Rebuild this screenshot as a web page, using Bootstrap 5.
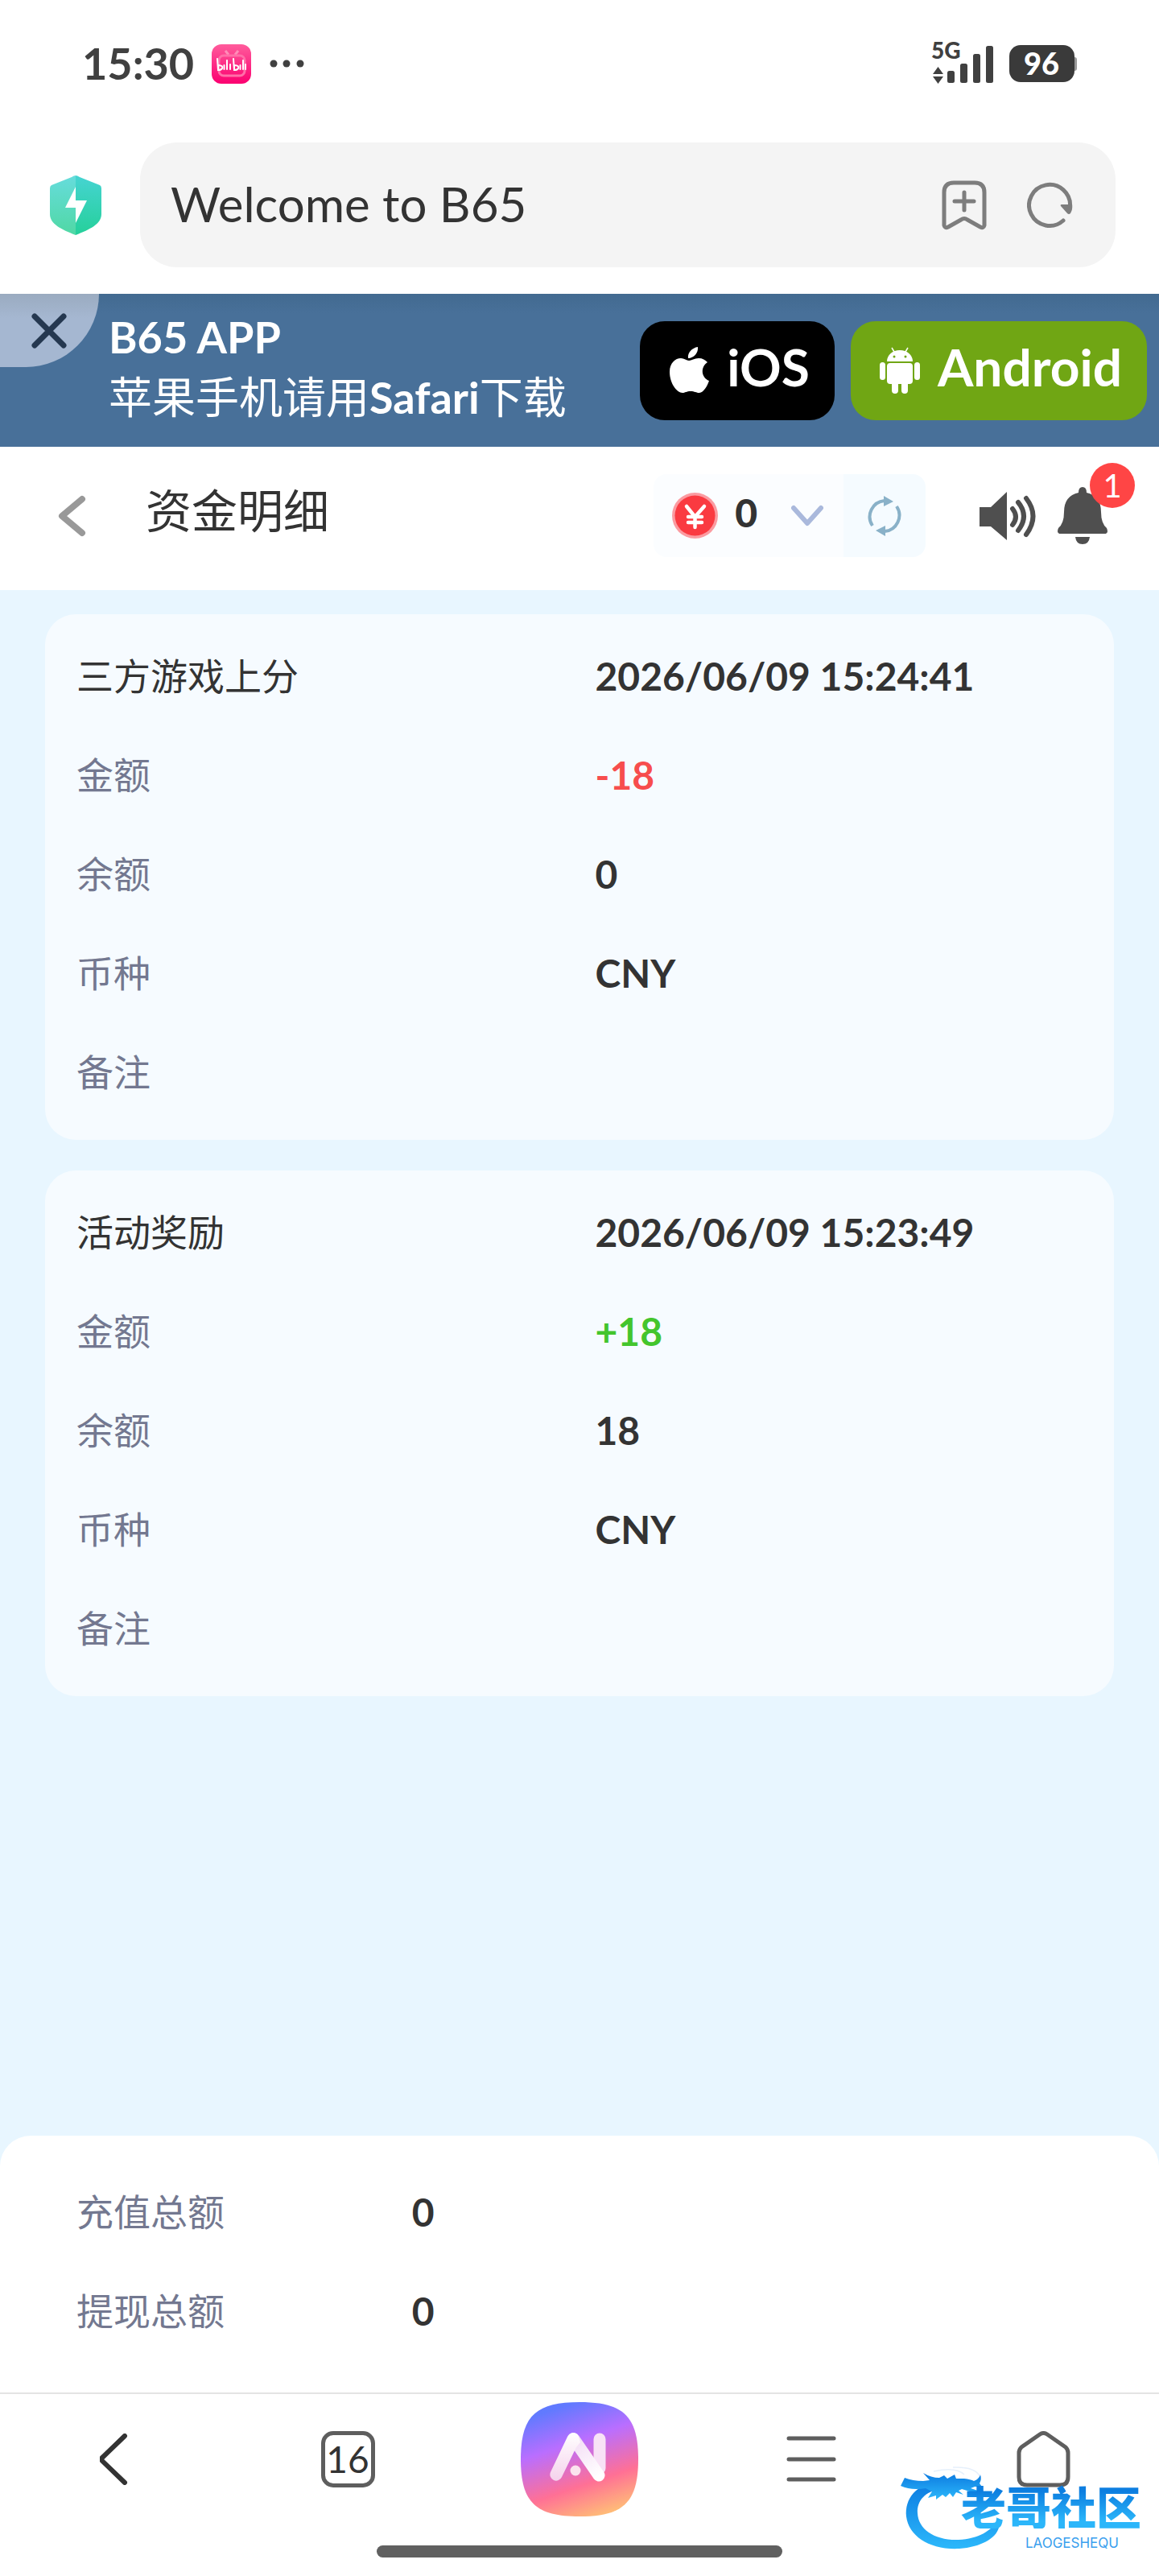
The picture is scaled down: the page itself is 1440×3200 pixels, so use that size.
<!DOCTYPE html>
<html lang="zh-CN">
<head>
<meta charset="utf-8">
<meta name="viewport" content="width=device-width, initial-scale=1">
<title>资金明细</title>
<link href="https://cdn.jsdelivr.net/npm/bootstrap@5.3.0/dist/css/bootstrap.min.css" rel="stylesheet">
<style>
body { font-family: Lato, "Noto Sans CJK SC", sans-serif; color: #333; background: #fff; line-height: 1.2; }
svg { display: block; flex: none; }
button { color: inherit; }
.plain-btn { background: none; border: 0; padding: 0; }

.status { height: 158px; padding: 0 99px 0 102px; gap: 22px; color: #404040; }
.status-time { font-size: 54px; font-weight: 700; }

.addr-row { padding: 19px 54px 33px 62px; gap: 48px; }
.addr-box { height: 155px; border-radius: 46px; background: #f4f4f4; padding: 0 53px 0 38px; gap: 50px; color: #7d7d7d; }
.addr-box input { font-size: 60px; color: #333; background: none; border: 0; padding: 0 0 4px; min-width: 0; outline: 0; }

.app-banner { height: 190px; background: linear-gradient(#426a90, #487099 24px, #487099); color: #fff; padding: 0 15px 8px 135px; }
.app-banner p { font-size: 54px; line-height: 75px; margin: 0; }
.banner-close { left: 0; top: 0; width: 123px; height: 91px; border-radius: 0 0 91px 0; background: linear-gradient(#9aabc0, #a5b7d1 30px); padding: 0 0 0 39px; color: #253850; }
.store-links { gap: 20px; margin-top: 8px; }
.store-btn { height: 123px; border-radius: 31px; color: #fff; font-size: 64px; font-weight: 700; padding: 0 31px 0 36px; gap: 22px; text-decoration: none; }
.store-btn span { padding-bottom: 8px; line-height: 74px; }
.store-ios { background: #000; }
.store-android { background: #70a614; }

.page-head { height: 178px; padding: 0 64px 7px 72px; }
.page-head h1 { font-size: 57px; font-weight: 400; margin: 0 0 14px 74px; line-height: 68px; }
.wallet { height: 103px; border-radius: 16px; overflow: hidden; margin-right: 67px; }
.wallet-cur { background: #fbfdff; padding: 0 25px 0 23px; gap: 21px; font-size: 48px; font-weight: 700; }
.wallet-cur b { padding-bottom: 8px; margin-right: 21px; }
.wallet-sync { background: #f5fbff; padding: 0 29px; }
.bell { margin-left: 27px; }
.bell-count { left: 40px; top: -30px; width: 56px; height: 56px; background: #ff4545; color: #fff; font-size: 40px; line-height: 56px; text-align: center; }

.records { background: #e8f6ff; padding: 30px 56px 38px; gap: 38px; }
.record { background: #f6fbff; border-radius: 38px; padding: 15px 40px 23px 39px; }
.field { display: grid; grid-template-columns: 1fr 1fr; column-gap: 40px; }
.field dt, .totals dt { font-size: 46px; font-weight: 400; color: #737890; line-height: 123px; }
.field dt.record-type { color: #333; }
.field dd, .totals dd { font-size: 48px; font-weight: 700; line-height: 123px; margin: 0; }
.amount-out { color: #f74d4d; }
.amount-in { color: #43c52c; }

.totals-wrap { background: #e8f6ff; }
.totals { background: #fff; border-radius: 38px 38px 0 0; padding: 33px 95px 40px; }

.tabbar { border-top: 2px solid #e4e4e4; height: 190px; padding-bottom: 26px; color: #5e5e5e; }
.tab-count { width: 67px; height: 70px; border: 5px solid #5e5e5e; border-radius: 15px; font-size: 46px; line-height: 56px; color: #333; text-align: center; }
.gesture { width: 35%; height: 15px; border-radius: 8px; background: #606060; margin-bottom: 23px; }

.site-mark { right: 22px; bottom: 26px; width: 300px; height: 110px; }
.mark-name { right: 0; top: 19px; font-family: "Noto Sans CJK SC", sans-serif; font-size: 56px; font-weight: 900; line-height: 58px; white-space: nowrap; background: linear-gradient(#0d7ee0 20%, #2bb6fa 85%); -webkit-background-clip: text; background-clip: text; color: transparent; }
.mark-latin { right: 28px; top: 86px; font-family: Inter, sans-serif; font-size: 17px; line-height: 18px; color: #3aa0ee; }
</style>
<script src="https://cdn.jsdelivr.net/npm/bootstrap@5.3.0/dist/js/bootstrap.bundle.min.js"></script>
</head>
<body>
<div class="d-flex flex-column min-vh-100 position-relative">

  <div class="status d-flex align-items-center">
    <span class="status-time">15:30</span>
    <svg width="49" height="49" viewBox="0 0 49 49">
      <defs><linearGradient id="pk" x1="0" y1="0" x2="0" y2="1"><stop offset="0" stop-color="#ff5c9c"/><stop offset="1" stop-color="#fb0070"/></linearGradient></defs>
      <rect width="49" height="49" rx="12" fill="url(#pk)"/>
      <path d="M17 8l4 5M33 8l-4 5" stroke="#ff8db8" stroke-width="3"/>
      <rect x="9" y="14" width="32" height="25" rx="6" fill="none" stroke="#ff6fa8" stroke-width="3"/>
      <g fill="none" stroke="#fff" stroke-width="2" stroke-linecap="round"><path d="M7 18l1 14M27 18l1 14M15.500 26v5M19 20v11M23 25v6M35.500 26v5M39 20v11M42 25v6"/><path d="M8 26c5 0 6 2 5 4s-3 2-5 2zM28 26c5 0 6 2 5 4s-3 2-5 2z"/></g>
    </svg>
    <svg width="46" height="12" viewBox="0 0 46 12" fill="#404040"><circle cx="6" cy="6" r="4.500"/><circle cx="22" cy="6" r="4.500"/><circle cx="39" cy="6" r="4.500"/></svg>
    <div class="ms-auto d-flex align-items-center">
      <svg width="81" height="76" viewBox="-4 -12 81 76" fill="#404040">
        <text x="-1" y="20" font-family="Lato, sans-serif" font-size="28" font-weight="900">5G</text>
        <path d="M1 39l6.500-9 6.500 9zM1 42h13l-6.500 9z"/>
        <rect x="19" y="35" width="9" height="15" rx="2.500"/><rect x="35" y="26" width="9" height="24" rx="2.500"/><rect x="51" y="14" width="9" height="36" rx="2.500"/><rect x="67" y="4" width="9" height="46" rx="2.500"/>
      </svg>
      <svg class="ms-3" width="90" height="48" viewBox="0 0 90 48">
        <rect x="81" y="16" width="6" height="17" rx="3" fill="#999"/>
        <rect x="3" y="1" width="81" height="46" rx="14" fill="#3a3a3a"/>
        <text x="43" y="38" text-anchor="middle" font-family="Lato, sans-serif" font-size="38" font-weight="900" fill="#fff">96</text>
      </svg>
    </div>
  </div>

  <div class="addr-row d-flex align-items-center">
    <svg width="64" height="74" viewBox="0 0 64 74">
      <defs><linearGradient id="sh" x1="0" y1="0" x2="0" y2="1"><stop offset="0" stop-color="#66dcdc"/><stop offset="1" stop-color="#50d8a4"/></linearGradient><linearGradient id="sh2" x1="0" y1="0" x2="0" y2="1"><stop offset="0" stop-color="#46d4d2"/><stop offset="1" stop-color="#25d09a"/></linearGradient></defs>
      <path d="M32 0Q30 0 27 2L2 12Q0 13 0 16v32c0 12 14 19 32 26z" fill="url(#sh)"/>
      <path d="M32 0q2 0 5 2l25 10q2 1 2 4v32c0 12-14 19-32 26z" fill="url(#sh2)"/>
      <path d="M32 14L19 40h13v19l14-28H32z" fill="#fff"/>
    </svg>
    <div class="addr-box d-flex align-items-center flex-grow-1">
      <input class="flex-grow-1" type="text" value="Welcome to B65" aria-label="地址">
      <button class="plain-btn" type="button" aria-label="收藏"><svg width="56" height="62" viewBox="0 0 56 62" fill="none" stroke="#7d7d7d" stroke-width="5" stroke-linecap="round" stroke-linejoin="round"><path d="M3 56V15Q3 3 15 3h26q12 0 12 12v41q-1 4-5 2L32 49q-4-3-8 0L8 58q-4 2-5-2z"/><path d="M28 15v22M16 26h24"/></svg></button>
      <button class="plain-btn" type="button" aria-label="刷新"><svg width="57" height="58" viewBox="0 0 57 58"><path d="M45 48A25.500 25.500 0 1 1 53.500 31" fill="none" stroke="#7d7d7d" stroke-width="5" stroke-linecap="round"/><path d="M43 28h13q1 6-2 11-2 2-4 0l-8-9q-1-2 1-2z" fill="#7d7d7d"/></svg></button>
    </div>
  </div>

  <section class="app-banner position-relative d-flex align-items-center">
    <button class="banner-close plain-btn position-absolute" type="button" aria-label="关闭"><svg width="44" height="44" viewBox="0 0 44 44" stroke="#253850" stroke-width="7" stroke-linecap="round"><path d="M4 4l36 36M40 4L4 40"/></svg></button>
    <div class="me-auto">
      <p class="fw-bold">B65 APP</p>
      <p>苹果手机请用<b>Safari</b>下载</p>
    </div>
    <div class="store-links d-flex">
      <a class="store-btn store-ios d-flex align-items-center" href="#ios">
        <svg width="50" height="58" viewBox="0 0 50 58" fill="#fff"><path d="M36 0c1 7-5 14-12 14C23 7 29 1 36 0zM25 17c3 0 7-3 12-3s8 2 11 5c-9 6-8 19 2 23-2 6-7 15-12 15-4 0-6-2-11-2s-7 2-10 2C10 57 1 45 1 31 1 20 8 14 15 14c4 0 7 3 10 3z"/></svg>
        <span>iOS</span>
      </a>
      <a class="store-btn store-android d-flex align-items-center" href="#android">
        <svg width="50" height="58" viewBox="0 0 50 58" fill="#fff"><path d="M9 18C9 10 16 4 25 4s16 6 16 14z"/><path d="M18 6L15 1M32 6l3-5" stroke="#fff" stroke-width="1.500"/><rect x="9" y="20" width="32" height="26" rx="4"/><rect x="0" y="19" width="7" height="22" rx="3.500"/><rect x="43" y="19" width="7" height="22" rx="3.500"/><rect x="15" y="40" width="8" height="18" rx="4"/><rect x="27" y="40" width="8" height="18" rx="4"/><circle cx="18" cy="12" r="1.500" fill="#70a614"/><circle cx="32" cy="12" r="1.500" fill="#70a614"/></svg>
        <span>Android</span>
      </a>
    </div>
  </section>

  <header class="page-head d-flex align-items-center">
    <button class="plain-btn" type="button" aria-label="返回"><svg width="35" height="52" viewBox="0 0 35 52" fill="none" stroke="#999" stroke-width="8" stroke-linecap="round" stroke-linejoin="round"><path d="M30 5L5 26l25 21"/></svg></button>
    <h1>资金明细</h1>
    <div class="wallet d-flex ms-auto">
      <button class="plain-btn wallet-cur d-flex align-items-center" type="button">
        <svg width="57" height="57" viewBox="0 0 57 57"><circle cx="28.500" cy="28.500" r="28.500" fill="#fb9ba1"/><circle cx="28.500" cy="28.500" r="25" fill="#fa3a41"/><path d="M18 17l10.500 13L40 17M28.500 30v13M20 30h17M20 37h17" fill="none" stroke="#fff" stroke-width="4.500" stroke-linecap="round"/></svg>
        <b>0</b>
        <svg width="40" height="28" viewBox="0 0 40 28" fill="none" stroke="#aab9dc" stroke-width="6" stroke-linecap="round" stroke-linejoin="round"><path d="M3 4l17 19L37 4"/></svg>
      </button>
      <button class="plain-btn wallet-sync" type="button" aria-label="刷新余额"><svg width="44" height="50" viewBox="0 0 44 50"><path d="M7 37A20 20 0 0 1 22 6M37 13a20 20 0 0 1-15 31" fill="none" stroke="#89b1c8" stroke-width="4"/><path d="M21 0l12 7-12 6zM23 50l-12-7 12-6z" fill="#89b1c8"/></svg></button>
    </div>
    <button class="plain-btn" type="button" aria-label="声音"><svg width="70" height="60" viewBox="0 0 70 60"><path d="M0 19h14L34 0v60L14 43H0z" fill="#4f4f4f"/><g fill="none" stroke="#4f4f4f" stroke-width="6" stroke-linecap="round"><path d="M41 21q8 10 0 20M48 13q14 17 0 35M58 8q17 22 0 45"/></g></svg></button>
    <button class="plain-btn bell position-relative" type="button" aria-label="通知">
      <svg width="62" height="71" viewBox="0 0 62 71" fill="#4f4f4f"><path d="M26 7Q26 0 31 0t5 7q18 4 18 24 0 14 7 20 3 7-3 7H4q-6 0-3-7 7-6 7-20Q8 11 26 7zM22 62h18q-1 9-9 9t-9-9z"/></svg>
      <span class="bell-count position-absolute rounded-circle">1</span>
    </button>
  </header>

  <main class="records d-flex flex-column flex-grow-1">
    <dl class="record mb-0">
      <div class="field"><dt class="record-type">三方游戏上分</dt><dd>2026/06/09 15:24:41</dd></div>
      <div class="field"><dt>金额</dt><dd class="amount-out">-18</dd></div>
      <div class="field"><dt>余额</dt><dd>0</dd></div>
      <div class="field"><dt>币种</dt><dd>CNY</dd></div>
      <div class="field"><dt>备注</dt><dd></dd></div>
    </dl>
    <dl class="record mb-0">
      <div class="field"><dt class="record-type">活动奖励</dt><dd>2026/06/09 15:23:49</dd></div>
      <div class="field"><dt>金额</dt><dd class="amount-in">+18</dd></div>
      <div class="field"><dt>余额</dt><dd>18</dd></div>
      <div class="field"><dt>币种</dt><dd>CNY</dd></div>
      <div class="field"><dt>备注</dt><dd></dd></div>
    </dl>
  </main>

  <div class="totals-wrap">
    <dl class="totals mb-0">
      <div class="row g-0"><dt class="col-4">充值总额</dt><dd class="col-8">0</dd></div>
      <div class="row g-0"><dt class="col-4">提现总额</dt><dd class="col-8">0</dd></div>
    </dl>
  </div>

  <nav class="tabbar row g-0 align-items-center">
    <div class="col d-flex justify-content-center"><button class="plain-btn" type="button" aria-label="后退"><svg width="40" height="64" viewBox="3 0 40 64" fill="none" stroke="#333" stroke-width="6" stroke-linecap="round" stroke-linejoin="round"><path d="M34 3L6 30q-2 2 0 4l28 27"/></svg></button></div>
    <div class="col d-flex justify-content-center"><button class="plain-btn tab-count" type="button">16</button></div>
    <div class="col d-flex justify-content-center"><button class="plain-btn" type="button" aria-label="AI"><svg width="146" height="142" viewBox="0 0 146 142">
      <defs><linearGradient id="ai" x1=".3" y1="0" x2=".65" y2="1"><stop offset=".05" stop-color="#617aff"/><stop offset=".36" stop-color="#b96eff"/><stop offset=".72" stop-color="#ff7095"/><stop offset="1" stop-color="#ffbb78"/></linearGradient>
      <linearGradient id="w1" x1="0" y1="0" x2="0" y2="1"><stop offset="0" stop-color="#fff"/><stop offset="1" stop-color="#f5d2ec"/></linearGradient>
      <linearGradient id="w2" gradientUnits="userSpaceOnUse" x1="66" y1="45" x2="97" y2="92"><stop offset="0" stop-color="#f3dcf5"/><stop offset="1" stop-color="#fff"/></linearGradient></defs>
      <path d="M73 0C127 0 146 17 146 71S127 142 73 142 0 125 0 71 19 0 73 0z" fill="url(#ai)"/>
      <path d="M98 46v36" stroke="#f8e2f6" stroke-width="15" stroke-linecap="round"/>
      <path d="M66 46L97 91" stroke="url(#w2)" stroke-width="15" stroke-linecap="round"/>
      <path d="M64 38a7 7 0 0 1 8 5l2 7-5 6-18 37a7.500 7.500 0 0 1-14-6L58 43q2-4 6-5z" fill="url(#w1)"/>
      <circle cx="68" cy="85" r="6.500" fill="#fbe3ee"/>
    </svg></button></div>
    <div class="col d-flex justify-content-center"><button class="plain-btn" type="button" aria-label="菜单"><svg width="62" height="58" viewBox="0 0 62 58" stroke="#5e5e5e" stroke-width="5" stroke-linecap="round"><path d="M3 3h56M3 29h56M3 54h56"/></svg></button></div>
    <div class="col d-flex justify-content-center"><button class="plain-btn" type="button" aria-label="主页"><svg width="67" height="70" viewBox="0 0 67 70" fill="none" stroke="#5e5e5e" stroke-width="5" stroke-linejoin="round"><path d="M29 4q4.500-3 9 0l23 16q3 3 3 7v30q0 10-10 10H13Q3 67 3 57V27q0-4 3-7z"/></svg></button></div>
  </nav>
  <div class="gesture mx-auto"></div>

  <div class="site-mark position-absolute">
    <svg width="130" height="110" viewBox="0 0 130 110">
      <defs><linearGradient id="dg" x1="0" y1="0" x2="0" y2="1"><stop offset="0" stop-color="#0c7ae0"/><stop offset="1" stop-color="#2cb8fb"/></linearGradient></defs>
      <g fill="url(#dg)">
        <path d="M48 18C20 22 6 40 8 62c3 25 30 42 66 40 26-2 45-12 49-26V64c-8 16-26 26-50 27-30 1-50-13-51-33-1-16 10-27 28-30z"/>
        <path d="M6 14q10 4 23 4l8-1-8-9q10 6 20 6l6-3 4 4 9-5 2 5 10 0q8 1 12 3 6-2 8-8 2 6-1 11l3 4-9 0-5 2 9 3-1 6-9-5-10-3-4 2 6 5-9-3-4 6-4-5-5 5-4-3-8 6 0-5-10 3 5-8-8-4q-18 3-31-3z"/>
      </g>
      <path d="M80 10Q70 0 42 6M99 12Q94 0 66 1" fill="none" stroke="#e6f0fb" stroke-width="1.500"/>
    </svg>
    <span class="mark-name position-absolute">老哥社区</span>
    <span class="mark-latin position-absolute">LAOGESHEQU</span>
  </div>
</div>
</body>
</html>
